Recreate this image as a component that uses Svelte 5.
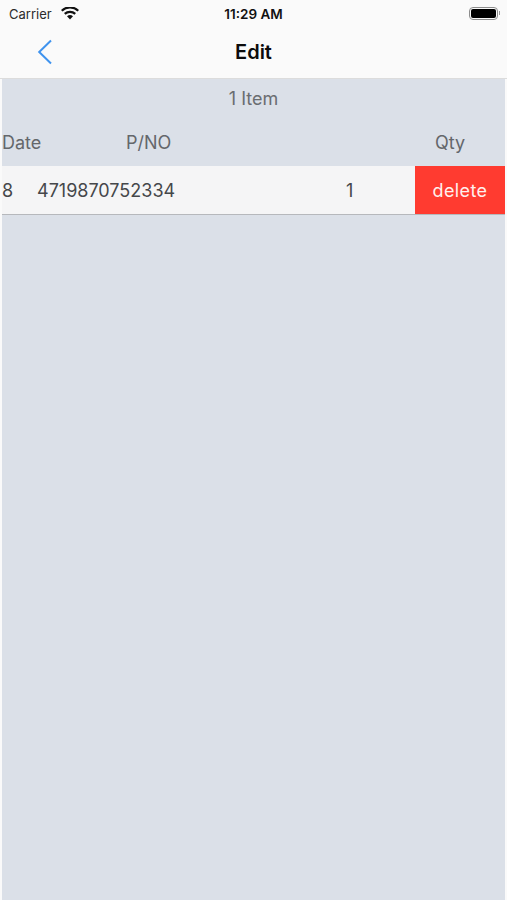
<script lang="ts">
  let rows = [{ date: "8", pno: "4719870752334", qty: 1 }];
</script>

<div class="screen">
  <header class="top">
    <div class="status">
      <div class="status-left">
        <span class="carrier">Carrier</span>
        <svg class="wifi" width="18" height="13" viewBox="0 0 18 13">
          <path d="M9 12.6 L6 9.2 A4.6 4.6 0 0 1 12 9.2 Z" fill="#111" />
          <path d="M4.5 7.7 L3 6 A9 9 0 0 1 15 6 L13.5 7.7 A6.8 6.8 0 0 0 4.5 7.7 Z" fill="#111" />
          <path d="M1.5 4.5 L0 2.9 A13 13 0 0 1 18 2.9 L16.5 4.5 A11 11 0 0 0 1.5 4.5 Z" fill="#111" />
        </svg>
      </div>
      <span class="clock">11:29 AM</span>
      <div class="battery-wrap">
        <div class="battery"><i></i></div>
        <b class="nub"></b>
      </div>
    </div>
    <div class="nav">
      <svg class="back" width="16" height="26" viewBox="0 0 16 26">
        <path d="M14 1.5 L2.2 13 L14 24.5" fill="none" stroke="#3f93ee" stroke-width="2" />
      </svg>
      <h1>Edit</h1>
    </div>
  </header>

  <main class="content">
    <div class="count">1 Item</div>
    <div class="heads">
      <span>Date</span>
      <span>P/NO</span>
      <span>Qty</span>
    </div>
    {#each rows as row}
      <div class="row">
        <span class="c-date">{row.date}</span>
        <span class="c-pno">{row.pno}</span>
        <span class="c-qty">{row.qty}</span>
        <button class="delete">delete</button>
      </div>
    {/each}
  </main>
</div>

<style>
  :global(body) {
    margin: 0;
    background: #fafafa;
  }

  .screen {
    width: 507px;
    height: 900px;
    display: flex;
    flex-direction: column;
    font-family: Inter, "Liberation Sans", sans-serif;
    color: #4f5256;
    overflow: hidden;
  }

  .top {
    height: 79px;
    flex: none;
    background: #fafafa;
    border-bottom: 1px solid #dcdcdc;
    box-sizing: border-box;
  }

  .status {
    height: 27px;
    display: grid;
    grid-template-columns: 1fr auto 1fr;
    align-items: center;
    padding: 0 9px;
  }

  .status-left {
    display: flex;
    align-items: center;
    gap: 9px;
  }

  .carrier {
    font-size: 13px;
    color: #2b2b2b;
  }

  .wifi {
    margin-top: 0;
  }

  .clock {
    font-size: 13.5px;
    font-weight: 600;
    color: #111;
  }

  .battery-wrap {
    justify-self: end;
    display: flex;
    align-items: center;
    gap: 1px;
    margin: -1px -2px 0 0;
  }

  .battery {
    width: 29px;
    height: 13px;
    box-sizing: border-box;
    border: 1px solid #8c8c8c;
    border-radius: 4px;
    padding: 1px;
  }

  .battery i {
    display: block;
    height: 100%;
    background: #000;
    border-radius: 2px;
  }

  .nub {
    width: 1px;
    height: 4px;
    background: #9a9a9a;
  }

  .nav {
    display: flex;
    justify-content: center;
    align-items: center;
    height: 50px;
    position: relative;
  }

  .back {
    position: absolute;
    left: 37px;
    top: 12px;
  }

  h1 {
    margin: 0;
    font-size: 20px;
    font-weight: 600;
    color: #0c0c0c;
  }

  .content {
    flex: 1;
    margin: 0 2px;
    background: #dbe0e8;
  }

  .count {
    height: 39px;
    display: flex;
    align-items: center;
    justify-content: center;
    font-size: 18px;
    color: #6a6d71;
  }

  .heads {
    height: 47px;
    padding: 1px 40px 0 0;
    display: grid;
    grid-template-columns: 124px 1fr auto;
    align-items: center;
    font-size: 18px;
    color: #64676b;
  }

  .row {
    height: 49px;
    box-sizing: border-box;
    display: flex;
    align-items: center;
    background: #f5f5f6;
    border-bottom: 1px solid #b6b8bc;
    font-size: 18px;
    color: #45474a;
  }

  .c-date {
    width: 35px;
  }

  .c-pno {
    width: 309px;
  }

  .c-qty {
    width: 69px;
  }

  .delete {
    flex: 1;
    height: 48px;
    border: none;
    padding: 0;
    background: #ff3b30;
    color: #fff0ee;
    font: inherit;
    font-size: 18px;
    letter-spacing: 0.4px;
  }
</style>
